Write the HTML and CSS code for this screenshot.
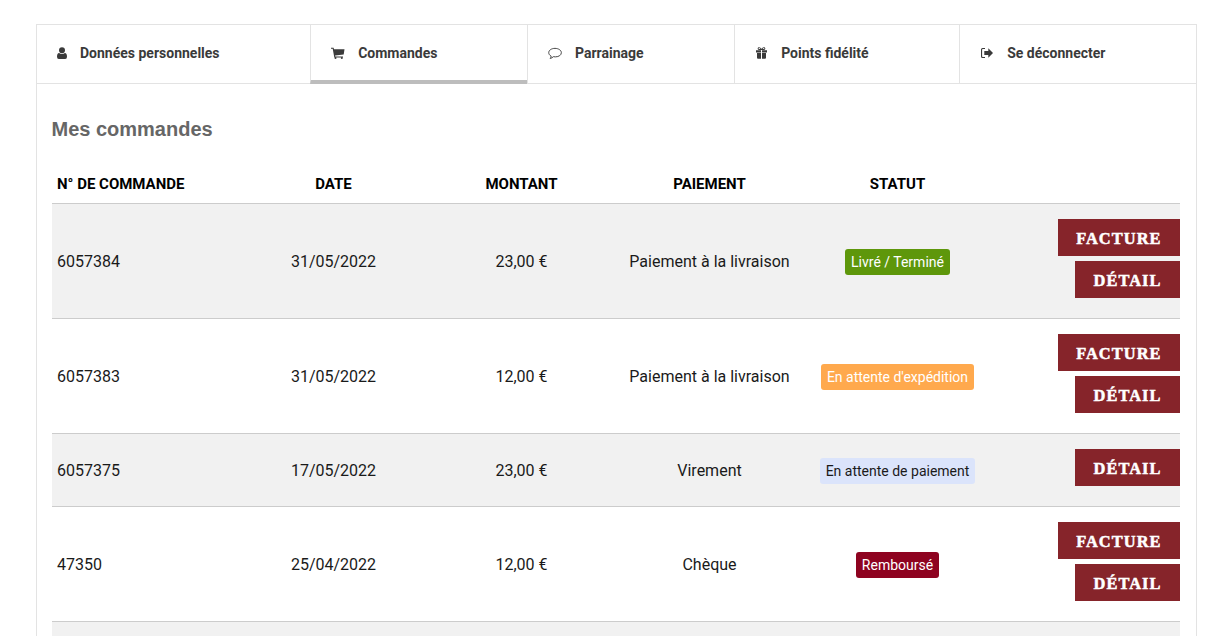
FILE: index.html
```html
<!DOCTYPE html>
<html lang="fr">
<head>
<meta charset="utf-8">
<title>Mes commandes</title>
<link rel="stylesheet" href="styles.css">
</head>
<body>
<div class="account">
  <nav class="tabs">
    <a class="tab" href="#"><svg class="icon w10" viewBox="0 0 10 12"><path d="M5 0.3a3 3 0 1 1 0 6 3 3 0 0 1 0-6zM2.100 6q1.300 1.100 2.900 1.100T7.900 6Q10 6.200 10 9.700 10 11.900 8.200 11.900H1.800Q0 11.900 0 9.700 0 6.200 2.100 6z"/></svg>Données personnelles</a>
    <a class="tab active" href="#"><svg class="icon w14" viewBox="0 0 14 12"><path d="M0 .8h2.600l.4 1.400H13.500l-.8 5.300-8.600.9.200 1H12v1H3.300L1.700 1.800H0z"/><circle cx="4.500" cy="11" r="1"/><circle cx="10.800" cy="11" r="1"/></svg>Commandes</a>
    <a class="tab" href="#"><svg class="icon w15 line" viewBox="0 0 15 13"><path d="M7.500 1C3.700 1 .8 3 .8 5.600c0 1.500 1 2.900 2.600 3.700-.1 1-.5 1.800-1.100 2.500 1.400-.2 2.500-.9 3.400-1.900.7.100 1.400.2 2.200.2 3.800 0 6.400-2 6.400-4.500S11.300 1 7.500 1z"/></svg>Parrainage</a>
    <a class="tab" href="#"><svg class="icon w13" viewBox="0 0 13 12"><path fill-rule="evenodd" d="M1 3.200h5v2.300H1zM7 3.200h5v2.300H7zM2 6h4v5.800H3q-1 0-1-1zM7 6h4v4.800q0 1-1 1H7zM4 .2C5.200.2 6 1 6.500 2 7 1 7.800.2 9 .2c1.800 0 1.800 2.800 0 2.800H4C2.200 3 2.200.2 4 .2zM4.100 1.100c-.8 0-.8 1 0 1H5.500C5.100 1.400 4.700 1.100 4.100 1.100zM8.900 1.100c-.6 0-1 .3-1.400 1H8.900c.8 0 .8-1 0-1z"/></svg>Points fidélité</a>
    <a class="tab" href="#"><svg class="icon w14" viewBox="0 0 14 12"><path d="M5 1H2.500Q1 1 1 2.500v7Q1 11 2.500 11H5V9.900H2.800q-.7 0-.7-.7V2.800q0-.7.700-.7H5z"/><path d="M8.300 1.300 13 6 8.300 10.700V8H4.300V4H8.300z"/></svg>Se déconnecter</a>
  </nav>
  <section class="panel">
    <h1 class="title">Mes commandes</h1>
    <table class="orders">
      <thead>
        <tr>
          <th class="first">N° de commande</th>
          <th>Date</th>
          <th>Montant</th>
          <th>Paiement</th>
          <th>Statut</th>
          <th></th>
        </tr>
      </thead>
      <tbody>
        <tr>
          <td class="first">6057384</td>
          <td>31/05/2022</td>
          <td>23,00 €</td>
          <td>Paiement à la livraison</td>
          <td><span class="badge delivered">Livré / Terminé</span></td>
          <td class="actions"><a class="btn" href="#">Facture</a><a class="btn" href="#">Détail</a></td>
        </tr>
        <tr>
          <td class="first">6057383</td>
          <td>31/05/2022</td>
          <td>12,00 €</td>
          <td>Paiement à la livraison</td>
          <td><span class="badge shipping">En attente d'expédition</span></td>
          <td class="actions"><a class="btn" href="#">Facture</a><a class="btn" href="#">Détail</a></td>
        </tr>
        <tr>
          <td class="first">6057375</td>
          <td>17/05/2022</td>
          <td>23,00 €</td>
          <td>Virement</td>
          <td><span class="badge waiting">En attente de paiement</span></td>
          <td class="actions"><a class="btn" href="#">Détail</a></td>
        </tr>
        <tr>
          <td class="first">47350</td>
          <td>25/04/2022</td>
          <td>12,00 €</td>
          <td>Chèque</td>
          <td><span class="badge refunded">Remboursé</span></td>
          <td class="actions"><a class="btn" href="#">Facture</a><a class="btn" href="#">Détail</a></td>
        </tr>
        <tr class="next">
          <td></td><td></td><td></td><td></td><td></td><td></td>
        </tr>
      </tbody>
    </table>
  </section>
</div>
</body>
</html>
```
FILE: styles.css
```css
* { box-sizing: border-box; }
html, body { margin: 0; background: #fff; }
body { font-family: Roboto, "Liberation Sans", sans-serif; color: #1a1a1a; font-size: 16px; height: 636px; overflow: hidden; }
.account { padding: 24px 34px 0 36px; }
.tabs { display: flex; border: 1px solid #e3e3e3; height: 60px; }
.tab { flex: 1 1 auto; display: flex; align-items: center; padding: 0 1px 2px 20px; font-size: 14px; font-weight: 700; color: #3a3a3a; text-decoration: none; border-left: 1px solid #e3e3e3; white-space: nowrap; }
.tab:first-child { border-left: 0; }
.tab.active { border-bottom: 4px solid #bdbdbd; margin-bottom: -1px; padding-bottom: 0; padding-right: 0; }
.icon { height: 12px; margin-right: 13px; fill: #3a3a3a; flex: none; }
.w10 { width: 10px; }
.w13 { width: 13px; }
.w14 { width: 14px; }
.w15 { width: 14px; height: 13px; }
.line { fill: none; stroke: #3a3a3a; stroke-width: 1; }
.panel { border: 1px solid #e3e3e3; border-top: 0; padding: 0 15px; height: 560px; }
.title { margin: 0 0 0 -0.5px; padding-top: 33px; height: 81px; font-family: "Liberation Sans", sans-serif; font-size: 20px; line-height: 24px; font-weight: 700; color: #666; }
.orders { width: 1128px; border-collapse: collapse; table-layout: fixed; }
.orders th { height: 38px; font-size: 15px; font-weight: 700; text-transform: uppercase; color: #000; text-align: center; padding: 0 1px 0 0; border-bottom: 1px solid #ccc; }
.orders td { font-size: 16px; text-align: center; padding: 17px 1px 15px 0; border-bottom: 1px solid #ccc; vertical-align: middle; }
.orders .first { text-align: left; padding-left: 5px; }
.orders tbody tr:nth-child(odd) { background: #f1f1f1; }
.orders .actions { padding: 15px 0; text-align: right; }
.next td { height: 60px; border-bottom: 0; }
.badge { display: inline-block; font-size: 14px; line-height: 16px; padding: 5px 5.7px; border-radius: 3px; vertical-align: middle; }
.delivered { background: #5e970b; color: #fff; }
.shipping { background: #ffa94d; color: #fff; }
.waiting { background: #dbe4fb; color: #1a1a1a; }
.refunded { background: #8e0320; color: #fff; }
.btn { display: block; margin-left: auto; margin-bottom: 5px; width: fit-content; height: 37px; line-height: 39px; padding: 0 18.500px; background: #86242a; color: #fff; font-family: "Liberation Serif", serif; font-weight: 700; font-size: 16.400px; letter-spacing: 1.050px; text-transform: uppercase; text-decoration: none; -webkit-text-stroke: 0.5px #fff; }
```
